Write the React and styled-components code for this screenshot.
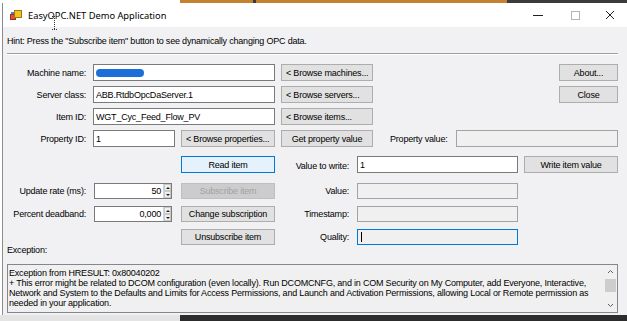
import React from 'react';
import styled, { createGlobalStyle } from 'styled-components';

const GlobalStyle = createGlobalStyle`
  html, body {
    margin: 0;
    padding: 0;
    background: #ffffff;
    overflow: hidden;
  }
  body {
    font-family: "Liberation Sans", Arial, sans-serif;
    color: #000;
  }
`;

const Screen = styled.div`
  width: 627px;
  height: 321px;
  display: flex;
  flex-direction: column;
  position: relative;
  overflow: hidden;
`;

const Strip = styled.div`
  height: ${p => p.$h}px;
  display: flex;
  flex-shrink: 0;
`;

const StripPart = styled.div`
  width: ${p => (p.$w ? `${p.$w}px` : 'auto')};
  flex: ${p => (p.$w ? '0 0 auto' : '1')};
  background: ${p => p.$c};
`;

const Window = styled.div`
  height: 312px;
  margin-left: 2px;
  border-left: 1px solid #8c8c8c;
  background: #f1f0f3;
  display: flex;
  flex-direction: column;
  flex-shrink: 0;
`;

const TitleBar = styled.div`
  height: 24px;
  background: #ffffff;
  display: flex;
  align-items: center;
  padding-left: 7px;
  gap: 6px;
`;

const Title = styled.span`
  font-family: "Noto Sans", "Open Sans", sans-serif;
  font-size: 9.3px;
  color: #000;
`;

const WinControls = styled.div`
  margin-left: auto;
  display: flex;
  height: 100%;
`;

const CtrlBtn = styled.div`
  width: ${p => p.$w}px;
  display: flex;
  align-items: center;
  justify-content: center;
`;

const Body = styled.div`
  padding: 0 9px 0 4px;
  display: flex;
  flex-direction: column;
  font-size: 9px;
  letter-spacing: -0.2px;
`;

const Hint = styled.div`
  margin-top: 9px;
  line-height: 11px;
  white-space: nowrap;
`;

const Separator = styled.div`
  margin-top: 6px;
  border-top: 1px solid #a0a0a0;
  border-bottom: 1px solid #ffffff;
`;

const TopGrid = styled.div`
  margin-top: 9px;
  display: grid;
  grid-template-columns: 80px 82px 94px 92px 1fr;
  grid-auto-rows: 17px;
  column-gap: 6px;
  row-gap: 5px;
`;

const BottomGrid = styled.div`
  margin-top: 9px;
  display: grid;
  grid-template-columns: 80px 82px 94px 70px 161px 1fr;
  grid-template-rows: 20px 16px 16px 16px;
  column-gap: 6px;
  row-gap: 7px;
`;

const Label = styled.div`
  grid-column: ${p => p.$col || 'auto'};
  align-self: center;
  text-align: right;
  padding-right: ${p => (p.$pr !== undefined ? p.$pr : 1)}px;
  white-space: nowrap;
`;

const Field = styled.div`
  grid-column: ${p => p.$col || 'auto'};
  box-sizing: border-box;
  height: ${p => p.$h || 16}px;
  align-self: ${p => p.$align || 'stretch'};
  border: 1px solid
    ${p => (p.$focus ? '#0078d7' : p.$disabled ? '#a3a3a3' : '#7a7a7a')};
  background: ${p => (p.$disabled || p.$focus ? '#f0f0f0' : '#ffffff')};
  display: flex;
  align-items: center;
  padding: 0 2px;
  white-space: nowrap;
  overflow: hidden;
  flex: ${p => (p.$grow ? '1' : '0 0 auto')};
  width: ${p => (p.$w ? `${p.$w}px` : 'auto')};
`;

const Redacted = styled.span`
  display: inline-block;
  width: 48px;
  height: 8px;
  border-radius: 4px;
  background: #1c6fd8;
`;

const Caret = styled.span`
  display: inline-block;
  width: 1px;
  height: 10px;
  background: #000;
  margin-left: 1px;
`;

const Button = styled.div`
  grid-column: ${p => p.$col || 'auto'};
  justify-self: ${p => p.$justify || 'stretch'};
  align-self: ${p => p.$align || 'stretch'};
  width: ${p => (p.$w ? `${p.$w}px` : 'auto')};
  height: ${p => p.$h || 17}px;
  box-sizing: border-box;
  border: 1px solid
    ${p => (p.$primary ? '#0078d7' : p.$disabled ? '#bfbfbf' : '#adadad')};
  background: ${p => (p.$primary ? '#e5f1fb' : p.$disabled ? '#cccccc' : '#e1e1e1')};
  color: ${p => (p.$disabled ? '#a2a2a2' : '#000')};
  display: flex;
  align-items: center;
  justify-content: ${p => (p.$left ? 'flex-start' : 'center')};
  padding-left: ${p => (p.$left ? 4 : 0)}px;
  white-space: nowrap;
`;

const PropCell = styled.div`
  display: flex;
  align-items: center;
  gap: 8px;
  padding-left: 11px;
`;

const Spin = styled.div`
  grid-column: 2;
  margin-left: 1px;
  width: 78px;
  box-sizing: border-box;
  border: 1px solid #7a7a7a;
  background: #fff;
  display: flex;
`;

const SpinText = styled.div`
  flex: 1;
  display: flex;
  align-items: center;
  justify-content: flex-end;
  padding-right: 2px;
`;

const SpinButtons = styled.div`
  width: 7px;
  display: flex;
  flex-direction: column;
  border-left: 1px solid #d4d4d4;
`;

const SpinArrow = styled.div`
  flex: 1;
  background: #f0f0f0;
  border: 1px solid #c9c9c9;
  display: flex;
  align-items: center;
  justify-content: center;
  &::after {
    content: '';
    border-left: 2px solid transparent;
    border-right: 2px solid transparent;
    ${p => (p.$down ? 'border-top: 2px solid #222;' : 'border-bottom: 2px solid #222;')}
  }
`;

const ExceptionLabel = styled.div`
  line-height: 11px;
  white-space: nowrap;
`;

const ExceptionBox = styled.div`
  margin-top: 8px;
  height: 49px;
  box-sizing: border-box;
  border: 1px solid #82878f;
  background: #f0f0f0;
  display: flex;
`;

const ExceptionText = styled.div`
  flex: 1;
  padding: 3px 0 0 1px;
  line-height: 10px;
  overflow: hidden;
`;

const Line = styled.div`
  white-space: nowrap;
`;

const ScrollBar = styled.div`
  width: 13px;
  display: flex;
  flex-direction: column;
  align-items: center;
  background: #f0f0f0;
`;

const ScrollArrow = styled.div`
  height: 13px;
  display: flex;
  align-items: center;
  justify-content: center;
`;

const Track = styled.div`
  flex: 1;
  width: 100%;
  display: flex;
  flex-direction: column;
  padding: 1px 1px;
  box-sizing: border-box;
`;

const Thumb = styled.div`
  height: 13px;
  background: #cdcdcd;
`;

const Pointer = styled.svg`
  position: absolute;
  left: 52px;
  top: 16px;
`;

function AppIcon() {
  return (
    <svg width="12" height="10" viewBox="0 0 12 10">
      <rect x="0.5" y="4.5" width="5" height="5" fill="#e0523a" stroke="#9c2e1d" />
      <rect x="4.5" y="0.5" width="7" height="7" fill="#f6c21a" stroke="#9a7a12" />
      <rect x="1" y="2" width="3" height="2" fill="#4a7fd0" />
    </svg>
  );
}

function Chevron({ down }) {
  return (
    <svg width="7" height="5" viewBox="0 0 7 5">
      <polyline
        points={down ? '1,1 3.5,3.5 6,1' : '1,4 3.5,1.5 6,4'}
        fill="none"
        stroke="#606060"
        strokeWidth="1"
      />
    </svg>
  );
}

const exceptionLines = [
  'Exception from HRESULT: 0x80040202',
  '+ This error might be related to DCOM configuration (even locally). Run DCOMCNFG, and in COM Security on My Computer, add Everyone, Interactive,',
  'Network and System to the Defaults and Limits for Access Permissions, and Launch and Activation Permissions, allowing Local or Remote permission as',
  'needed in your application.',
];

export default function App() {
  return (
    <Screen>
      <GlobalStyle />
      <Strip $h={3}>
        <StripPart $w={180} $c="#ffffff" />
        <StripPart $w={73} $c="#c4822f" />
        <StripPart $w={3} $c="#3a3a3a" />
        <StripPart $w={251} $c="#c4822f" />
        <StripPart $c="#3b3b3b" />
      </Strip>

      <Window>
        <TitleBar>
          <AppIcon />
          <Title>EasyOPC.NET Demo Application</Title>
          <WinControls>
            <CtrlBtn $w={37}>
              <svg width="10" height="10" viewBox="0 0 10 10">
                <line x1="0" y1="5.5" x2="10" y2="5.5" stroke="#222" strokeWidth="1" />
              </svg>
            </CtrlBtn>
            <CtrlBtn $w={37}>
              <svg width="10" height="10" viewBox="0 0 10 10">
                <rect x="1.5" y="1.5" width="8" height="8" fill="none" stroke="#b4b4b4" />
              </svg>
            </CtrlBtn>
            <CtrlBtn $w={34}>
              <svg width="10" height="10" viewBox="0 0 10 10">
                <path d="M1 1 L9 9 M9 1 L1 9" stroke="#222" strokeWidth="1" />
              </svg>
            </CtrlBtn>
          </WinControls>
        </TitleBar>

        <Body>
          <Hint>Hint: Press the "Subscribe item" button to see dynamically changing OPC data.</Hint>
          <Separator />

          <TopGrid>
            <Label $col={1}>Machine name:</Label>
            <Field $col="2 / 4" $h={17}>
              <Redacted />
            </Field>
            <Button $left>&lt; Browse machines...</Button>
            <Button $justify="end" $w={59}>About...</Button>

            <Label $col={1}>Server class:</Label>
            <Field $col="2 / 4" $h={17}>ABB.RtdbOpcDaServer.1</Field>
            <Button $left>&lt; Browse servers...</Button>
            <Button $justify="end" $w={59}>Close</Button>

            <Label $col={1}>Item ID:</Label>
            <Field $col="2 / 4" $h={17}>WGT_Cyc_Feed_Flow_PV</Field>
            <Button $left>&lt; Browse items...</Button>

            <Label $col={1}>Property ID:</Label>
            <Field $h={17}>1</Field>
            <Button $left>&lt; Browse properties...</Button>
            <Button>Get property value</Button>
            <PropCell>
              <Label $pr={0}>Property value:</Label>
              <Field $disabled $grow $h={17} />
            </PropCell>
          </TopGrid>

          <BottomGrid>
            <Button $col={3} $primary $align="start">Read item</Button>
            <Label $pr={2}>Value to write:</Label>
            <Field $h={17} $align="start">1</Field>
            <Button $align="start">Write item value</Button>

            <Label $col={1}>Update rate (ms):</Label>
            <Spin>
              <SpinText>50</SpinText>
              <SpinButtons>
                <SpinArrow />
                <SpinArrow $down />
              </SpinButtons>
            </Spin>
            <Button $disabled $h={16}>Subscribe item</Button>
            <Label $pr={2}>Value:</Label>
            <Field $disabled />

            <Label $col={1}>Percent deadband:</Label>
            <Spin>
              <SpinText>0,000</SpinText>
              <SpinButtons>
                <SpinArrow />
                <SpinArrow $down />
              </SpinButtons>
            </Spin>
            <Button $h={16}>Change subscription</Button>
            <Label $pr={2}>Timestamp:</Label>
            <Field $disabled />

            <Button $col={3} $h={16}>Unsubscribe item</Button>
            <Label $pr={2}>Quality:</Label>
            <Field $focus>
              <Caret />
            </Field>
          </BottomGrid>

          <ExceptionLabel>Exception:</ExceptionLabel>
          <ExceptionBox>
            <ExceptionText>
              {exceptionLines.map(line => (
                <Line key={line}>{line}</Line>
              ))}
            </ExceptionText>
            <ScrollBar>
              <ScrollArrow>
                <Chevron />
              </ScrollArrow>
              <Track>
                <Thumb />
              </Track>
              <ScrollArrow>
                <Chevron down />
              </ScrollArrow>
            </ScrollBar>
          </ExceptionBox>
        </Body>
      </Window>

      <Strip $h={6}>
        <StripPart $w={180} $c="#e4e4e4" />
        <StripPart $c="#2c2c2c" />
      </Strip>

      <Pointer width="5" height="14" viewBox="0 0 5 14">
        <line x1="2.5" y1="0" x2="2.5" y2="14" stroke="#333" strokeDasharray="1 1" />
        <line x1="0" y1="0.5" x2="5" y2="0.5" stroke="#333" strokeDasharray="1 1" />
        <line x1="0" y1="13.5" x2="5" y2="13.5" stroke="#333" strokeDasharray="1 1" />
      </Pointer>
    </Screen>
  );
}
